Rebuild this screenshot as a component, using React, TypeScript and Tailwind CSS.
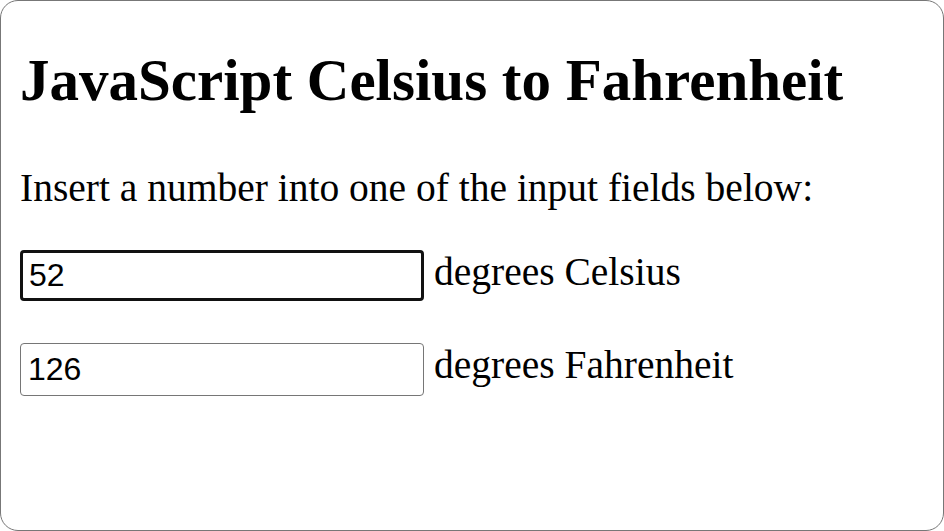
import { useState } from 'react'

export default function App() {
  const [celsius, setCelsius] = useState('52')
  const [fahrenheit, setFahrenheit] = useState('126')

  const fromC = (v: string) => {
    setCelsius(v)
    const n = parseFloat(v)
    setFahrenheit(isNaN(n) ? '' : String(Math.round(n * 1.8 + 32)))
  }

  const fromF = (v: string) => {
    setFahrenheit(v)
    const n = parseFloat(v)
    setCelsius(isNaN(n) ? '' : String(Math.round((n - 32) / 1.8)))
  }

  return (
    <div className="h-[531px] w-[944px] overflow-hidden rounded-[18px] border border-[#777] bg-white px-[19px] font-['Liberation_Serif',serif] text-black">
      <h1 className="mt-[50px] text-[59px] font-bold leading-[59px]">JavaScript Celsius to Fahrenheit</h1>
      <p className="mt-[58px] text-[39.5px] leading-[40px]">Insert a number into one of the input fields below:</p>
      <div className="mt-[42px] flex items-start gap-[10px]">
        <input
          value={celsius}
          onChange={e => fromC(e.target.value)}
          className="box-border h-[51px] w-[404px] rounded-[4px] border-[3px] border-[#111] px-[6px] font-['Liberation_Sans',sans-serif] text-[32px] outline-none"
        />
        <span className="mt-[2px] text-[39.5px] leading-[40px]">degrees Celsius</span>
      </div>
      <div className="mt-[42px] flex items-start gap-[10px]">
        <input
          value={fahrenheit}
          onChange={e => fromF(e.target.value)}
          className="box-border h-[53px] w-[404px] rounded-[4px] border-[1.5px] border-[#767676] px-[7px] font-['Liberation_Sans',sans-serif] text-[32px] outline-none"
        />
        <span className="mt-[2px] text-[39.5px] leading-[40px]">degrees Fahrenheit</span>
      </div>
    </div>
  )
}
